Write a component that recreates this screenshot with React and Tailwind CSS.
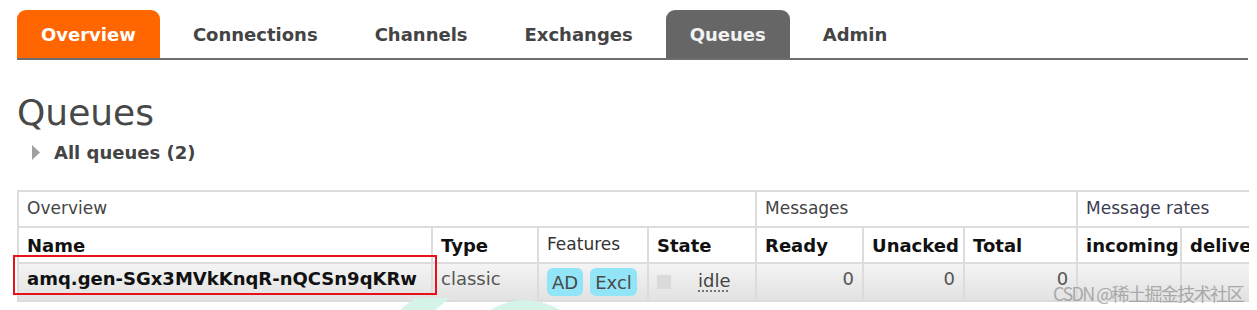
import React from "react";

const font = { fontFamily: '"DejaVu Sans", Verdana, sans-serif' };

function Tab({ label, active }) {
  let cls = "h-[48px] px-6 mr-[9px] flex items-center rounded-t-[9px] text-[18px] font-bold ";
  if (active === "orange") cls += "bg-[#ff6600] text-white";
  else if (active === "gray") cls += "bg-[#666666] text-[#f2f2f2]";
  else cls += "text-[#444444]";
  return <div className={cls}>{label}</div>;
}

export default function App() {
  const td = "border-2 border-[#dcdcdc] px-[8px] ";
  const dt = "pb-[8px] ";
  return (
    <div className="relative w-[1257px] h-[310px] overflow-hidden bg-white" style={font}>
      <div className="ml-[17px] mr-[9px] pt-[10px]">
        <div className="flex border-b-2 border-[#6e6e6e]">
          <Tab label="Overview" active="orange" />
          <Tab label="Connections" />
          <Tab label="Channels" />
          <Tab label="Exchanges" />
          <Tab label="Queues" active="gray" />
          <Tab label="Admin" />
        </div>
        <div className="mt-[31px] text-[36px] leading-[44px] text-[#484848]">Queues</div>
        <div className="mt-[5px] ml-[15px] flex items-center h-[24px]">
          <svg width="8" height="15" viewBox="0 0 8 15" className="mr-[14px]">
            <polygon points="0,0 8,7.5 0,15" fill="#a0a0a0" />
          </svg>
          <span className="text-[18px] font-bold text-[#444444]">All queues (2)</span>
        </div>
        <table className="mt-[26px] border-collapse table-fixed w-[1231px] text-[18px]">
          <colgroup>
            <col className="w-[414px]" />
            <col className="w-[106px]" />
            <col className="w-[110px]" />
            <col className="w-[108px]" />
            <col className="w-[107px]" />
            <col className="w-[101px]" />
            <col className="w-[113px]" />
            <col className="w-[104px]" />
            <col className="w-[68px]" />
          </colgroup>
          <thead>
            <tr className="h-[36px]">
              <th colSpan={4} className={td + "text-left font-normal text-[17px] text-[#444444]"}>Overview</th>
              <th colSpan={3} className={td + "text-left font-normal text-[17px] text-[#444444]"}>Messages</th>
              <th colSpan={2} className={td + "text-left font-normal text-[17px] text-[#3c3c52] border-r-0 whitespace-nowrap"}>Message rates</th>
            </tr>
            <tr className="h-[36px]">
              <th className={td + "text-left font-bold text-[#111111]"}>Name</th>
              <th className={td + "px-[5px] text-left font-bold text-[#111111]"}>Type</th>
              <th className={td + "text-left font-normal text-[17px] text-[#333333]"}>Features</th>
              <th className={td + "text-left font-bold text-[#111111]"}>State</th>
              <th className={td + "text-left font-bold text-[#111111]"}>Ready</th>
              <th className={td + "text-left font-bold text-[#111111]"}>Unacked</th>
              <th className={td + "text-left font-bold text-[#111111]"}>Total</th>
              <th className={td + "text-left font-bold text-[#111111]"}>incoming</th>
              <th className={td + "text-left font-bold text-[#111111] whitespace-nowrap overflow-hidden border-r-0"}>delivers</th>
            </tr>
          </thead>
          <tbody>
            <tr className="h-[38px] bg-gradient-to-b from-[#f4f4f4] to-[#e2e2e2]">
              <td className={td + dt + "font-bold text-[#111111] whitespace-nowrap"}>amq.gen-SGx3MVkKnqR-nQCSn9qKRw</td>
              <td className={td + dt + "text-[#555555] px-[5px]"}>classic</td>
              <td className={td}>
                <div className="flex gap-[7px]">
                  <span className="bg-[#92e4f7] rounded-[6px] px-[5px] h-[28px] flex items-center text-[#4a4a4a]">AD</span>
                  <span className="bg-[#92e4f7] rounded-[6px] px-[5px] h-[28px] flex items-center text-[#4a4a4a]">Excl</span>
                </div>
              </td>
              <td className={td}>
                <div className="flex items-center">
                  <span className="w-[14px] h-[14px] bg-[#dadada] mr-[27px]"></span>
                  <span className="text-[#444444] underline decoration-dotted decoration-[#666] underline-offset-4 -mt-[4px]">idle</span>
                </div>
              </td>
              <td className={td + dt + "text-right text-[#555555]"}>0</td>
              <td className={td + dt + "text-right text-[#555555]"}>0</td>
              <td className={td + dt + "text-right text-[#555555]"}>0</td>
              <td className={td}></td>
              <td className={td + "border-r-0"}></td>
            </tr>
          </tbody>
        </table>
      </div>
      <div className="absolute left-[13px] top-[255px] w-[424px] h-[40px] border-2 border-[#e8101a]"></div>
      <svg className="absolute left-[390px] top-[298px]" width="200" height="12" viewBox="0 0 200 12">
        <path d="M10 12 L25 0 L60 0 L45 12 Z" fill="#d6f3e8" />
        <path d="M100 12 Q135 -8 170 12 Z" fill="#d6f3e8" />
      </svg>
      <div className="absolute left-[1053px] top-[281px] text-[18px] leading-[24px] tracking-[-1.6px] text-[#9a9a9a] opacity-80 whitespace-nowrap" style={{ fontFamily: '"Noto Sans CJK SC", "DejaVu Sans", sans-serif' }}>
        CSDN @稀土掘金技术社区
      </div>
    </div>
  );
}
